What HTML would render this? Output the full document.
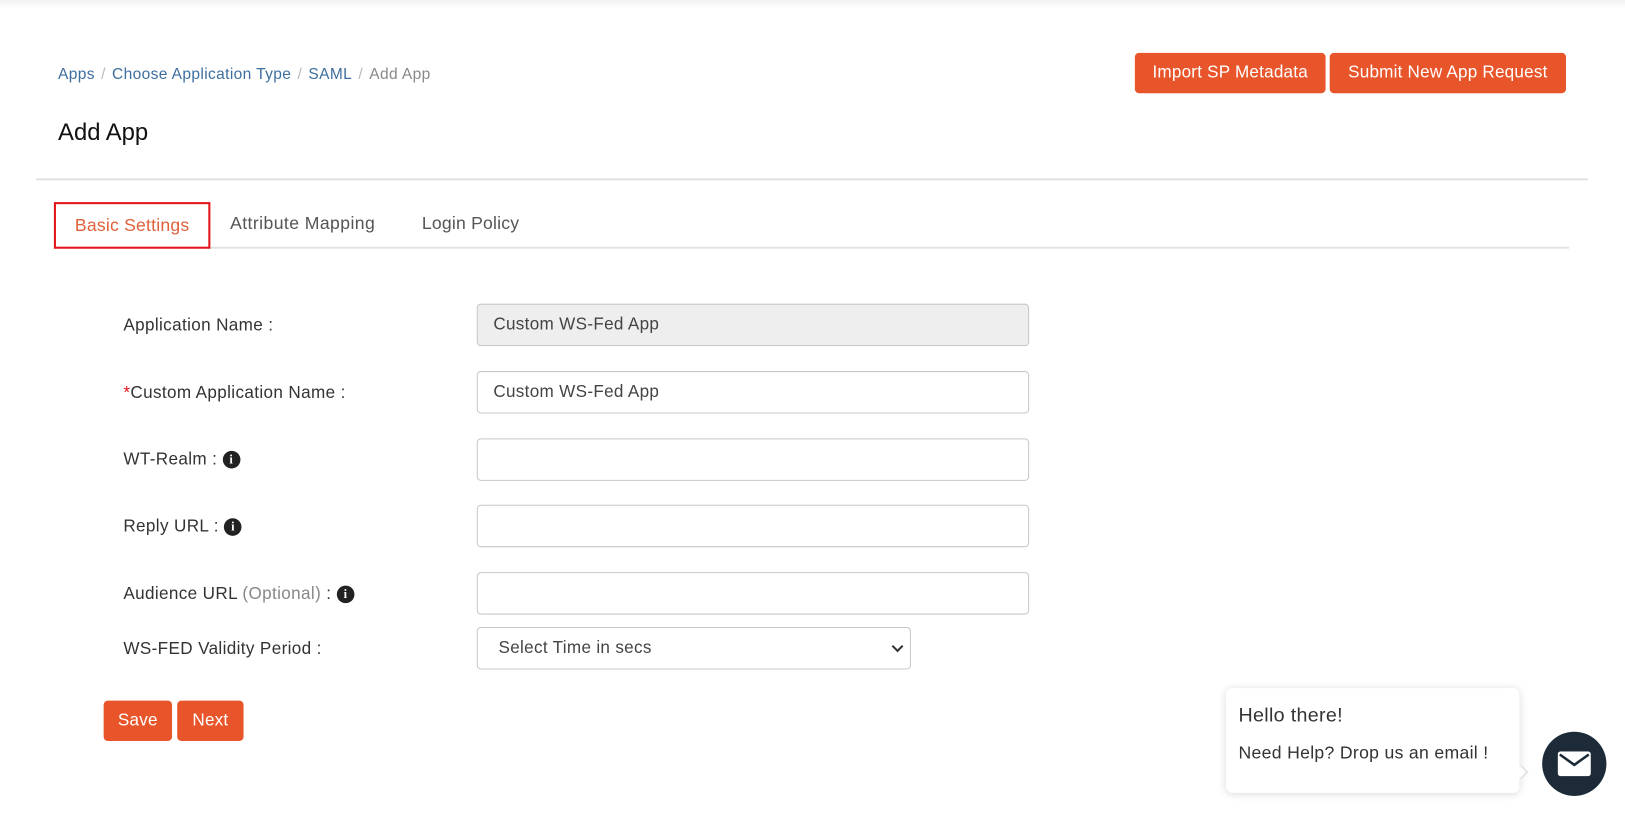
<!DOCTYPE html>
<html><head><style>
*{box-sizing:border-box;margin:0;padding:0}
html,body{width:1625px;height:820px;overflow:hidden;background:#fff}
body{font-family:"Liberation Sans",sans-serif;color:#333;position:relative}
#w{position:absolute;left:0;top:0;width:1568px;height:792px;transform:scale(1.0364);transform-origin:0 0}
.a{position:absolute}
.bc{top:63px;left:56px;font-size:15px;color:#888;letter-spacing:0.35px}
.bc a{color:#3d6e9e;text-decoration:none}
.bc span{color:#bbb;margin:0 6px}
.btn{background:#e8552a;color:#fff;border-radius:4px;font-size:16.5px;display:flex;align-items:center;justify-content:center;letter-spacing:0.2px}
.lbl{left:119px;font-size:16.5px;color:#333;letter-spacing:0.35px}
.inp{left:460px;width:533px;height:41px;border:1px solid #c8c8c8;border-radius:4px;font-size:16.5px;padding-left:15px;display:flex;align-items:center;color:#444;letter-spacing:0.3px}
.i{display:inline-block;width:17px;height:17px;border-radius:50%;background:#222;color:#fff;font-size:12px;font-weight:bold;text-align:center;line-height:17px;font-family:"Liberation Serif",serif;vertical-align:1px;margin-left:0px;letter-spacing:0}
</style></head><body>
<div class="a" style="top:0;left:0;width:1625px;height:8px;background:linear-gradient(#f2f2f2,#fff)"></div>
<div id="w">
<div class="a bc"><a>Apps</a><span>/</span><a>Choose Application Type</a><span>/</span><a>SAML</a><span>/</span>Add App</div>
<div class="a btn" style="left:1095px;top:51px;width:184px;height:39px">Import SP Metadata</div>
<div class="a btn" style="left:1283px;top:51px;width:228px;height:39px">Submit New App Request</div>
<div class="a" style="left:56px;top:114px;font-size:23px;color:#111">Add App</div>
<div class="a" style="left:35px;top:172px;width:1497px;height:2px;background:#e2e2e2"></div>
<div class="a" style="left:52px;top:238px;width:1462px;height:2px;background:#e2e2e2"></div>
<div class="a" style="left:52px;top:195px;width:151px;height:45px;border:2px solid #e3151a;background:#fff;color:#e0603a;font-size:17px;display:flex;align-items:center;justify-content:center;letter-spacing:0.2px">Basic Settings</div>
<div class="a" style="left:222px;top:206px;font-size:17px;color:#555;letter-spacing:0.4px">Attribute Mapping</div>
<div class="a" style="left:407px;top:206px;font-size:17px;color:#555;letter-spacing:0.2px">Login Policy</div>

<div class="a lbl" style="top:305px">Application Name :</div>
<div class="a inp" style="top:293px;background:#eee">Custom WS-Fed App</div>
<div class="a lbl" style="top:370px"><span style="color:#e3151a">*</span>Custom Application Name :</div>
<div class="a inp" style="top:358px">Custom WS-Fed App</div>
<div class="a lbl" style="top:434px">WT-Realm : <span class="i">i</span></div>
<div class="a inp" style="top:423px"></div>
<div class="a lbl" style="top:499px">Reply URL : <span class="i">i</span></div>
<div class="a inp" style="top:487px"></div>
<div class="a lbl" style="top:564px">Audience URL <span style="color:#888">(Optional)</span> : <span class="i">i</span></div>
<div class="a inp" style="top:552px"></div>
<div class="a lbl" style="top:617px">WS-FED Validity Period :</div>
<div class="a inp" style="top:605px;width:419px;padding-left:20px">Select Time in secs
<svg class="a" style="right:6px;top:15px" width="12" height="10" viewBox="0 0 12 10"><path d="M1 2l5 5 5-5" stroke="#333" stroke-width="2" fill="none"/></svg></div>
<div class="a btn" style="left:100px;top:676px;width:66px;height:39px">Save</div>
<div class="a btn" style="left:171px;top:676px;width:64px;height:39px">Next</div>

<div class="a" style="left:1183px;top:664px;width:283px;height:101px;background:#fff;border-radius:6px;box-shadow:0 1px 8px rgba(0,0,0,.15)">
<div class="a" style="left:12px;top:16px;font-size:19px;color:#333;letter-spacing:0.3px">Hello there!</div>
<div class="a" style="left:12px;top:53px;font-size:17px;color:#333;letter-spacing:0.3px">Need Help? Drop us an email !</div>
</div>
<div class="a" style="left:1463px;top:740px;width:10px;height:10px;border-top:2px solid #e6e6e6;border-right:2px solid #e6e6e6;transform:rotate(45deg);background:#fff"></div>
<div class="a" style="left:1488px;top:706px;width:62px;height:62px;border-radius:50%;background:#1c2b37">
<svg class="a" style="left:15px;top:19px" width="32" height="24" viewBox="0 0 32 24"><rect x="0" y="0" width="32" height="24" rx="3" fill="#fff"/><path d="M2 3l14 10 14-10" stroke="#1c2b37" stroke-width="2.5" fill="none"/></svg>
</div>
</div>
</body></html>
